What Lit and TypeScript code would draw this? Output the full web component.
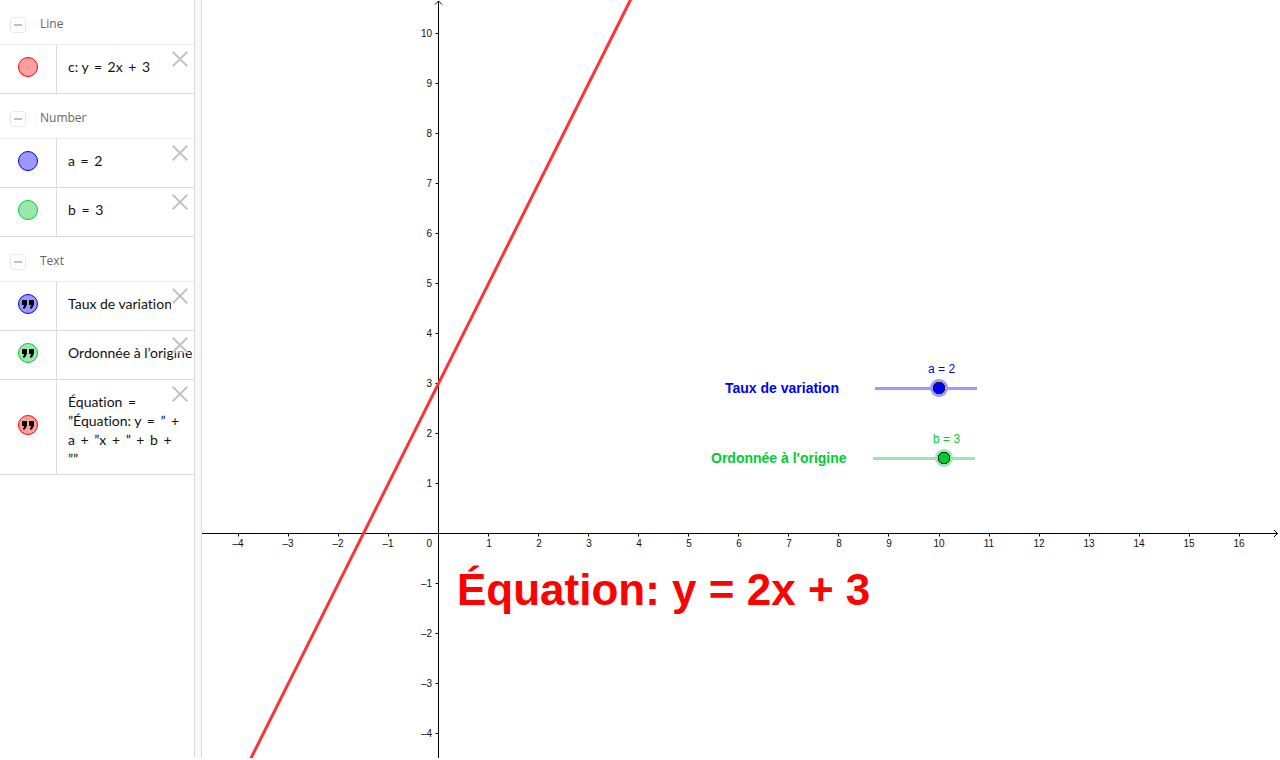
import { LitElement, html, svg, css, nothing } from "lit";
import { customElement, state } from "lit/decorators.js";
import { classMap } from "lit/directives/class-map.js";
import { styleMap } from "lit/directives/style-map.js";

type Tone = "red" | "blue" | "green";
interface Entry {
  id: string;
  tone: Tone;
  quote?: boolean;
  clip?: boolean;
  text: string;
}
interface Group {
  name: string;
  entries: Entry[];
}

const UNIT_X = 50.05;
const UNIT_Y = 50;
const ORIGIN_X = 236.5;
const ORIGIN_Y = 533.5;

const range = (from: number, to: number) =>
  Array.from({ length: Math.max(0, to - from + 1) }, (_, i) => from + i);
const signed = (n: number) => (n < 0 ? `–${-n}` : `${n}`);

@customElement("app-root")
export class AppRoot extends LitElement {
  @state() private a = 2;
  @state() private b = 3;
  @state() private viewWidth = 1076;
  @state() private viewHeight = 758;
  @state() private closed = new Set<string>();
  @state() private concealed = new Set<string>();
  @state() private removed = new Set<string>();
  private observer?: ResizeObserver;

  static styles = css`
    :host {
      display: flex;
      box-sizing: border-box;
      height: 100vh;
      padding: 0 2px 2px 0;
      overflow: hidden;
      background: #fff;
      font-family: "Liberation Sans", Arial, sans-serif;
    }
    button {
      margin: 0;
      padding: 0;
      border: 0;
      background: none;
      cursor: pointer;
    }
    svg {
      display: block;
    }
    .algebra {
      flex: none;
      width: 194px;
      overflow: hidden;
    }
    .splitter {
      flex: none;
      width: 6px;
      border: solid #dcdcdc;
      border-width: 0 1px;
      background: #f8f8f8;
      cursor: col-resize;
    }
    .head {
      display: flex;
      align-items: center;
      gap: 14px;
      box-sizing: border-box;
      height: 45px;
      padding: 6px 10px 0;
      border-bottom: 1px solid #ebebeb;
    }
    .title {
      margin: 0;
      padding-bottom: 2px;
      font: 400 12px/16px "Open Sans", sans-serif;
      color: #666;
    }
    .list {
      margin: 0;
      padding: 0;
      list-style: none;
    }
    .row {
      position: relative;
      display: flex;
      min-height: 48px;
      border-bottom: 1px solid #dcdcdc;
    }
    .side {
      display: flex;
      flex: none;
      align-items: center;
      justify-content: center;
      width: 56px;
      padding-bottom: 4px;
      box-sizing: border-box;
    }
    .cell {
      flex: 1;
      min-width: 0;
      padding: 12px 4px 6px 11px;
      border-left: 1px solid #dcdcdc;
      font: 400 14px/19px Lato, sans-serif;
      font-variant-ligatures: none;
      color: #111;
    }
    .clip {
      margin-right: 19px;
      white-space: nowrap;
      overflow: hidden;
    }
    .line {
      display: block;
      white-space: nowrap;
    }
    .op {
      padding: 0 2px;
    }
    .close {
      position: absolute;
      top: 6px;
      right: 6px;
      background: rgba(255, 255, 255, 0.5);
    }
    .marble {
      display: flex;
      align-items: center;
      justify-content: center;
      box-sizing: border-box;
      width: 20px;
      height: 20px;
      border: 1px solid var(--ink);
      border-radius: 50%;
      background: var(--soft);
    }
    .off {
      background: #fff;
    }
    .red {
      --ink: #f00;
      --soft: #ff9f9f;
    }
    .blue {
      --ink: #00f;
      --soft: #9999ff;
    }
    .green {
      --ink: #0c3;
      --soft: #9be8ae;
    }
    .graph {
      position: relative;
      flex: 1;
      min-width: 0;
      overflow: hidden;
    }
    .plot {
      position: absolute;
      inset: 0;
    }
    .axis {
      fill: none;
      stroke: #000;
      stroke-width: 1;
    }
    .tick {
      font-size: 10px;
      fill: #111;
    }
    .mid {
      text-anchor: middle;
    }
    .end {
      text-anchor: end;
    }
    .curve {
      stroke: #ff3333;
      stroke-width: 3;
    }
    .control,
    .caption,
    .equation {
      position: absolute;
      color: var(--ink);
      white-space: nowrap;
    }
    .caption {
      font-weight: 700;
      font-size: 14px;
      line-height: 20px;
    }
    .equation {
      left: 255px;
      top: 564px;
      font-weight: 700;
      font-size: 44px;
      line-height: 52px;
    }
    .caption.blue {
      left: 523px;
      top: 378px;
    }
    .caption.green {
      left: 509px;
      top: 448px;
    }
    .control {
      display: grid;
      justify-items: start;
      gap: 2px;
      width: 118px;
    }
    .control.blue {
      left: 665px;
      top: 361px;
    }
    .control.green {
      left: 663px;
      top: 431px;
    }
    .value {
      font-size: 12px;
      line-height: 16px;
    }
    .slider {
      appearance: none;
      width: 118px;
      height: 18px;
      margin: 0;
      background: linear-gradient(var(--soft), var(--soft)) center / 102px 3px no-repeat;
      cursor: pointer;
    }
    .slider::-webkit-slider-thumb {
      appearance: none;
      box-sizing: border-box;
      width: 18px;
      height: 18px;
      border-radius: 50%;
      background: radial-gradient(circle, var(--ink) 5px, #222 5.5px, #222 6px, var(--soft) 6.5px);
    }
  `;

  firstUpdated() {
    const graph = this.renderRoot.querySelector(".graph")!;
    this.observer = new ResizeObserver(([entry]) => {
      this.viewWidth = Math.round(entry.contentRect.width);
      this.viewHeight = Math.round(entry.contentRect.height);
    });
    this.observer.observe(graph);
  }

  disconnectedCallback() {
    super.disconnectedCallback();
    this.observer?.disconnect();
  }

  private get formula() {
    return `y = ${this.a}x + ${this.b}`;
  }

  private get groups(): Group[] {
    return [
      { name: "Line", entries: [{ id: "c", tone: "red", text: `c: ${this.formula}` }] },
      {
        name: "Number",
        entries: [
          { id: "a", tone: "blue", text: `a = ${this.a}` },
          { id: "b", tone: "green", text: `b = ${this.b}` },
        ],
      },
      {
        name: "Text",
        entries: [
          { id: "rate", tone: "blue", quote: true, clip: true, text: "Taux de variation" },
          { id: "start", tone: "green", quote: true, text: "Ordonnée à l’origine" },
          {
            id: "eq",
            tone: "red",
            quote: true,
            text: "Équation =\n”Équation: y = ” +\na + ”x + ” + b +\n””",
          },
        ],
      },
    ];
  }

  private toggled(set: Set<string>, key: string) {
    const next = new Set(set);
    if (!next.delete(key)) next.add(key);
    return next;
  }

  // Binary operators get a little extra room on both sides.
  private renderMath(line: string) {
    return html`<span class="line"
      >${line.split(/([=+])/).map((t) => (t === "=" || t === "+" ? html`<span class="op">${t}</span>` : t))}</span
    >`;
  }

  private renderEntry(e: Entry) {
    return html`<li class="row">
      <div class="side">
        <button
          class=${classMap({ marble: true, [e.tone]: true, off: this.concealed.has(e.id) })}
          aria-label="Show or hide ${e.id}"
          @click=${() => (this.concealed = this.toggled(this.concealed, e.id))}
        >
          ${e.quote
            ? html`<svg width="14" height="10" viewBox="0 0 14 10" aria-hidden="true">
                <path d="M1 1h5v4.5L4 9.5H1.7L3.2 6H1zM8 1h5v4.5L11 9.5H8.7L10.2 6H8z" />
              </svg>`
            : nothing}
        </button>
      </div>
      <div class="cell">
        <div class=${classMap({ clip: !!e.clip })}>
          ${e.text.split("\n").map((t) => this.renderMath(t))}
        </div>
      </div>
      <button
        class="close"
        aria-label="Delete ${e.id}"
        @click=${() => (this.removed = this.toggled(this.removed, e.id))}
      >
        <svg width="16" height="16" viewBox="0 0 16 16" aria-hidden="true">
          <path d="M.7.7l14.6 14.6M15.3.7L.7 15.3" stroke="#c4c4c4" stroke-width="2" />
        </svg>
      </button>
    </li>`;
  }

  private renderGroup(g: Group) {
    const closed = this.closed.has(g.name);
    return html`<section>
      <header class="head">
        <button
          aria-label="Toggle ${g.name}"
          aria-expanded=${closed ? "false" : "true"}
          @click=${() => (this.closed = this.toggled(this.closed, g.name))}
        >
          <svg width="16" height="16" viewBox="0 0 16 16" aria-hidden="true">
            <rect x=".5" y=".5" width="15" height="15" rx="3" fill="#fff" stroke="#e6e6e6" />
            <path d="M4 8h8${closed ? "M8 4v8" : ""}" stroke="#c0c4c0" stroke-width="2" />
          </svg>
        </button>
        <h2 class="title">${g.name}</h2>
      </header>
      ${closed
        ? nothing
        : html`<ul class="list">
            ${g.entries.filter((e) => !this.removed.has(e.id)).map((e) => this.renderEntry(e))}
          </ul>`}
    </section>`;
  }

  private renderPlot() {
    const w = this.viewWidth;
    const h = this.viewHeight;
    const px = (x: number) => ORIGIN_X + x * UNIT_X;
    const py = (y: number) => ORIGIN_Y - y * UNIT_Y;
    const snap = (v: number) => Math.floor(v) + 0.5;
    const xs = range(-4, Math.floor((w - 20 - ORIGIN_X) / UNIT_X)).filter((n) => n !== 0);
    const ys = range(Math.ceil((ORIGIN_Y - h + 10) / UNIT_Y), 10).filter((n) => n !== 0);
    const f = (x: number) => this.a * x + this.b;
    return html`<svg class="plot" width=${w} height=${h} role="img" aria-label="Graph">
      <path
        class="axis"
        d="M0 ${ORIGIN_Y}H${w}M${w - 4} ${ORIGIN_Y - 3.5}L${w - 0.5} ${ORIGIN_Y}L${w - 4} ${ORIGIN_Y + 3.5}M${ORIGIN_X} ${h}V1M${ORIGIN_X - 3.5} 4.5L${ORIGIN_X} 1L${ORIGIN_X + 3.5} 4.5"
      />
      ${xs.map(
        (n) => svg`<path class="axis" d="M${snap(px(n))} ${ORIGIN_Y}v3" />
          <text class="tick mid" x=${Math.round(px(n))} y="547">${signed(n)}</text>`
      )}
      ${ys.map(
        (n) => svg`<path class="axis" d="M${ORIGIN_X} ${py(n)}h-3" />
          <text class="tick end" x="230" y=${Math.floor(py(n)) + 4}>${signed(n)}</text>`
      )}
      <text class="tick end" x="230" y="547">0</text>
      ${this.concealed.has("c")
        ? nothing
        : svg`<line class="curve" x1=${px(-30)} y1=${py(f(-30))} x2=${px(40)} y2=${py(f(40))} />`}
    </svg>`;
  }

  private renderSlider(
    id: string,
    tone: Tone,
    min: number,
    max: number,
    value: number,
    set: (v: number) => void
  ) {
    const offset = Math.round((100 * (value - min)) / (max - min)) - 2;
    return html`<div class="control ${tone}">
      <label class="value" for=${id} style=${styleMap({ marginLeft: `${offset}px` })}
        >${id} = ${value}</label
      >
      <input
        id=${id}
        class="slider"
        type="range"
        min=${min}
        max=${max}
        .value=${String(value)}
        @input=${(e: Event) => set(Number((e.target as HTMLInputElement).value))}
      />
    </div>`;
  }

  render() {
    return html`
      <aside class="algebra">${this.groups.map((g) => this.renderGroup(g))}</aside>
      <div class="splitter"></div>
      <main class="graph">
        ${this.renderPlot()}
        <label class="caption blue" for="a">Taux de variation</label>
        ${this.renderSlider("a", "blue", -3, 5, this.a, (v) => (this.a = v))}
        <label class="caption green" for="b">Ordonnée à l'origine</label>
        ${this.renderSlider("b", "green", -4, 6, this.b, (v) => (this.b = v))}
        <div class="equation red">Équation: ${this.formula}</div>
      </main>
    `;
  }
}
